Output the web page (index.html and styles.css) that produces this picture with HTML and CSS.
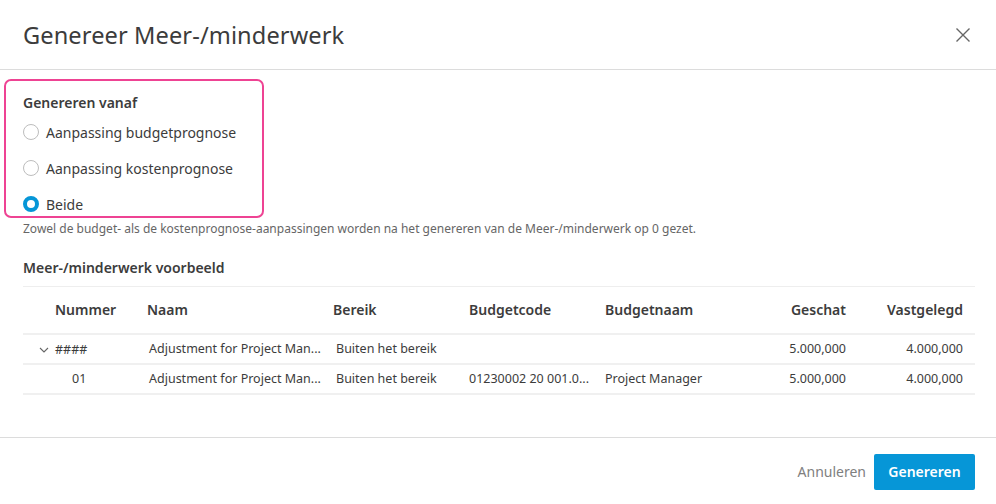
FILE: index.html
```html
<!DOCTYPE html>
<html lang="nl">
<head>
<meta charset="utf-8">
<link rel="stylesheet" href="styles.css">
</head>
<body>
<div class="dialog">
  <header class="head">
    <h1 class="title">Genereer Meer-/minderwerk</h1>
    <button class="close" aria-label="Sluiten">
      <svg width="16" height="16" viewBox="0 0 16 16"><path d="M1.5 1.5 L14.5 14.5 M14.5 1.5 L1.5 14.5" stroke="#666" stroke-width="1.4" fill="none"/></svg>
    </button>
  </header>
  <main class="body">
    <div class="group">
      <div class="label">Genereren vanaf</div>
      <label class="radio"><span class="dot"></span>Aanpassing budgetprognose</label>
      <label class="radio"><span class="dot"></span>Aanpassing kostenprognose</label>
      <label class="radio"><span class="dot on"></span>Beide</label>
    </div>
    <p class="note">Zowel de budget- als de kostenprognose-aanpassingen worden na het genereren van de Meer-/minderwerk op 0 gezet.</p>
    <h2 class="sub">Meer-/minderwerk voorbeeld</h2>
    <table class="grid">
      <thead>
        <tr>
          <th class="c-num">Nummer</th>
          <th class="c-name">Naam</th>
          <th class="c-range">Bereik</th>
          <th class="c-code">Budgetcode</th>
          <th class="c-bname">Budgetnaam</th>
          <th class="c-est r">Geschat</th>
          <th class="c-fix r">Vastgelegd</th>
        </tr>
      </thead>
      <tbody>
        <tr>
          <td class="c-num"><span class="chev"><svg width="10" height="6" viewBox="0 0 10 6"><path d="M1 1 L5 5 L9 1" stroke="#666" stroke-width="1.1" fill="none"/></svg></span>####</td>
          <td class="c-name">Adjustment for Project Man...</td>
          <td class="c-range">Buiten het bereik</td>
          <td class="c-code"></td>
          <td class="c-bname"></td>
          <td class="c-est r">5.000,000</td>
          <td class="c-fix r">4.000,000</td>
        </tr>
        <tr>
          <td class="c-num child">01</td>
          <td class="c-name">Adjustment for Project Man...</td>
          <td class="c-range">Buiten het bereik</td>
          <td class="c-code">01230002 20 001.0...</td>
          <td class="c-bname">Project Manager</td>
          <td class="c-est r">5.000,000</td>
          <td class="c-fix r">4.000,000</td>
        </tr>
      </tbody>
    </table>
  </main>
  <footer class="foot">
    <button class="btn-link">Annuleren</button>
    <button class="btn-primary">Genereren</button>
  </footer>
</div>
</body>
</html>
```
FILE: styles.css
```css
* { box-sizing: border-box; }
html, body { margin: 0; padding: 0; background: #fff; }
body {
  font-family: "Noto Sans", "Open Sans", sans-serif;
  color: #3c3c3c;
  width: 996px;
  height: 504px;
  overflow: hidden;
}
.dialog { display: flex; flex-direction: column; height: 504px; }
.head {
  height: 70px;
  border-bottom: 1px solid #dcdcdc;
  display: flex;
  align-items: center;
  justify-content: space-between;
  padding: 0 24px 0 23px;
}
.title {
  margin: 0;
  font-size: 23.6px;
  font-weight: 400;
  color: #3c3c3c;
  letter-spacing: 0.1px;
}
.close {
  border: 0; background: none; padding: 0; width: 16px; height: 16px;
  display: flex; margin-right: 1px;
}
.body { flex: 1; padding: 9px 21px 0 23px; }
.group {
  margin-left: -19px;
  width: 260px;
  border: 2px solid #ee4393;
  border-radius: 7px;
  padding: 13px 0 0 17px;
  display: flex;
  flex-direction: column;
  gap: 12px;
}
.label { font-size: 14px; font-weight: 600; line-height: 18px; margin-bottom: -4px; }
.radio {
  display: flex; align-items: center; gap: 7px;
  height: 24px; font-size: 14px;
}
.dot {
  width: 16px; height: 16px; border-radius: 50%;
  border: 1px solid #bdbdbd; background: #fff; flex: none;
}
.dot.on { border: 4px solid #0696d7; }
.note { margin: 3px 0 0; font-size: 12px; color: #666; line-height: 16px; }
.sub { margin: 22px 0 0; font-size: 14px; font-weight: 600; line-height: 18px; }
.grid {
  margin-top: 9px;
  width: 952px;
  border-collapse: collapse;
  table-layout: fixed;
  font-size: 12.5px;
  border-top: 1px solid #eeeeee;
}
.grid th {
  font-size: 14px; font-weight: 600; text-align: left;
  height: 47px; border-bottom: 2px solid #f0f0f0; padding: 0;
}
.grid td { height: 30px; padding: 0; border-bottom: 2px solid #f0f0f0; white-space: nowrap; color: #3c3c3c; }
.grid .r { text-align: right; }
th.c-num { width: 124px; padding-left: 32px; }
td.c-num { padding-left: 16px; }
td.child { padding-left: 49px; }
.chev { display: inline-block; width: 16px; vertical-align: 1px; }
th.c-name { width: 186px; }
td.c-name { padding-left: 2px; }
.c-range { width: 136px; }
td.c-range { padding-left: 3px; }
.c-code { width: 136px; }
.c-bname { width: 110px; }
.c-est { width: 131px; }
.c-fix { width: 129px; padding-right: 12px !important; }
.foot {
  height: 67px;
  border-top: 1px solid #dcdcdc;
  display: flex; align-items: center; justify-content: flex-end;
  padding: 0 21px 0 0;
  gap: 8px;
}
.btn-link {
  border: 0; background: none; font-family: inherit; font-size: 14px; color: #808080; padding: 0;
}
.btn-primary {
  border: 0; border-radius: 2px; background: #0696d7; color: #fff;
  font-family: inherit; font-size: 14px; font-weight: 600;
  width: 101px; height: 36px; margin-top: 1px;
}
```
